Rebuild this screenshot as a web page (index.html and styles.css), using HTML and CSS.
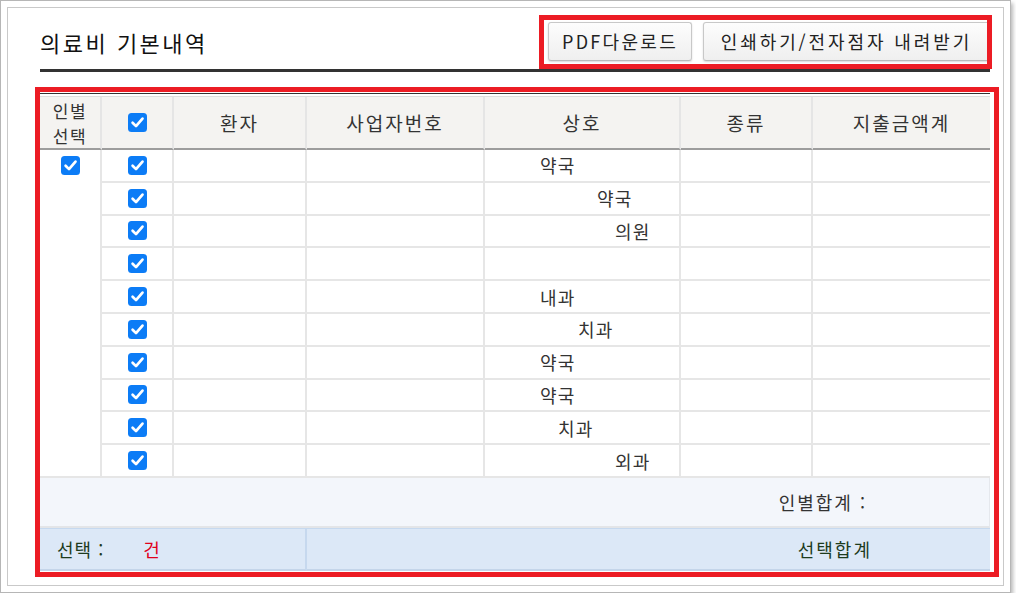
FILE: index.html
```html
<!DOCTYPE html>
<html lang="ko">
<head>
<meta charset="utf-8">
<title>의료비 기본내역</title>
<link rel="stylesheet" href="styles.css">
</head>
<body>
<div class="frame">
  <div class="panel">
    <div class="head">
      <h2 class="title">의료비 기본내역</h2>
      <div class="btns">
        <button class="btn btn-pdf" type="button">PDF다운로드</button>
        <button class="btn btn-print" type="button">인쇄하기/전자점자 내려받기</button>
      </div>
    </div>
    <div class="grid-wrap">
      <table class="grid">
        <colgroup>
          <col class="w1"><col class="w2"><col class="w3"><col class="w4"><col class="w5"><col class="w6"><col class="w7">
        </colgroup>
        <thead>
          <tr class="hrow">
            <th class="h-sel"><span class="hl">인별</span><span class="hl">선택</span></th>
            <th><span class="cb"><svg viewBox="0 0 19 19" width="19" height="19"><rect width="19" height="19" rx="3.5" fill="#0c7cf6"/><path d="M4.6 9.8 L8 13.1 L14.5 5.6" fill="none" stroke="#fff" stroke-width="2.7" stroke-linecap="round" stroke-linejoin="round"/></svg></span></th>
            <th>환자</th>
            <th>사업자번호</th>
            <th>상호</th>
            <th>종류</th>
            <th class="last">지출금액계</th>
          </tr>
        </thead>
        <tbody>
          <tr class="row">
            <td class="c-sel" rowspan="10"><span class="cb"><svg viewBox="0 0 19 19" width="19" height="19"><rect width="19" height="19" rx="3.5" fill="#0c7cf6"/><path d="M4.6 9.8 L8 13.1 L14.5 5.6" fill="none" stroke="#fff" stroke-width="2.7" stroke-linecap="round" stroke-linejoin="round"/></svg></span></td>
            <td class="c-cb"><span class="cb"><svg viewBox="0 0 19 19" width="19" height="19"><rect width="19" height="19" rx="3.5" fill="#0c7cf6"/><path d="M4.6 9.8 L8 13.1 L14.5 5.6" fill="none" stroke="#fff" stroke-width="2.7" stroke-linecap="round" stroke-linejoin="round"/></svg></span></td>
            <td></td><td></td><td class="c-name i1">약국</td><td></td><td class="last"></td>
          </tr>
          <tr class="row">
            <td class="c-cb"><span class="cb"><svg viewBox="0 0 19 19" width="19" height="19"><rect width="19" height="19" rx="3.5" fill="#0c7cf6"/><path d="M4.6 9.8 L8 13.1 L14.5 5.6" fill="none" stroke="#fff" stroke-width="2.7" stroke-linecap="round" stroke-linejoin="round"/></svg></span></td>
            <td></td><td></td><td class="c-name i4">약국</td><td></td><td class="last"></td>
          </tr>
          <tr class="row">
            <td class="c-cb"><span class="cb"><svg viewBox="0 0 19 19" width="19" height="19"><rect width="19" height="19" rx="3.5" fill="#0c7cf6"/><path d="M4.6 9.8 L8 13.1 L14.5 5.6" fill="none" stroke="#fff" stroke-width="2.7" stroke-linecap="round" stroke-linejoin="round"/></svg></span></td>
            <td></td><td></td><td class="c-name i5">의원</td><td></td><td class="last"></td>
          </tr>
          <tr class="row">
            <td class="c-cb"><span class="cb"><svg viewBox="0 0 19 19" width="19" height="19"><rect width="19" height="19" rx="3.5" fill="#0c7cf6"/><path d="M4.6 9.8 L8 13.1 L14.5 5.6" fill="none" stroke="#fff" stroke-width="2.7" stroke-linecap="round" stroke-linejoin="round"/></svg></span></td>
            <td></td><td></td><td class="c-name"></td><td></td><td class="last"></td>
          </tr>
          <tr class="row">
            <td class="c-cb"><span class="cb"><svg viewBox="0 0 19 19" width="19" height="19"><rect width="19" height="19" rx="3.5" fill="#0c7cf6"/><path d="M4.6 9.8 L8 13.1 L14.5 5.6" fill="none" stroke="#fff" stroke-width="2.7" stroke-linecap="round" stroke-linejoin="round"/></svg></span></td>
            <td></td><td></td><td class="c-name i1">내과</td><td></td><td class="last"></td>
          </tr>
          <tr class="row">
            <td class="c-cb"><span class="cb"><svg viewBox="0 0 19 19" width="19" height="19"><rect width="19" height="19" rx="3.5" fill="#0c7cf6"/><path d="M4.6 9.8 L8 13.1 L14.5 5.6" fill="none" stroke="#fff" stroke-width="2.7" stroke-linecap="round" stroke-linejoin="round"/></svg></span></td>
            <td></td><td></td><td class="c-name i3">치과</td><td></td><td class="last"></td>
          </tr>
          <tr class="row">
            <td class="c-cb"><span class="cb"><svg viewBox="0 0 19 19" width="19" height="19"><rect width="19" height="19" rx="3.5" fill="#0c7cf6"/><path d="M4.6 9.8 L8 13.1 L14.5 5.6" fill="none" stroke="#fff" stroke-width="2.7" stroke-linecap="round" stroke-linejoin="round"/></svg></span></td>
            <td></td><td></td><td class="c-name i1">약국</td><td></td><td class="last"></td>
          </tr>
          <tr class="row">
            <td class="c-cb"><span class="cb"><svg viewBox="0 0 19 19" width="19" height="19"><rect width="19" height="19" rx="3.5" fill="#0c7cf6"/><path d="M4.6 9.8 L8 13.1 L14.5 5.6" fill="none" stroke="#fff" stroke-width="2.7" stroke-linecap="round" stroke-linejoin="round"/></svg></span></td>
            <td></td><td></td><td class="c-name i1">약국</td><td></td><td class="last"></td>
          </tr>
          <tr class="row">
            <td class="c-cb"><span class="cb"><svg viewBox="0 0 19 19" width="19" height="19"><rect width="19" height="19" rx="3.5" fill="#0c7cf6"/><path d="M4.6 9.8 L8 13.1 L14.5 5.6" fill="none" stroke="#fff" stroke-width="2.7" stroke-linecap="round" stroke-linejoin="round"/></svg></span></td>
            <td></td><td></td><td class="c-name i2">치과</td><td></td><td class="last"></td>
          </tr>
          <tr class="row">
            <td class="c-cb"><span class="cb"><svg viewBox="0 0 19 19" width="19" height="19"><rect width="19" height="19" rx="3.5" fill="#0c7cf6"/><path d="M4.6 9.8 L8 13.1 L14.5 5.6" fill="none" stroke="#fff" stroke-width="2.7" stroke-linecap="round" stroke-linejoin="round"/></svg></span></td>
            <td></td><td></td><td class="c-name i5">외과</td><td></td><td class="last"></td>
          </tr>
        </tbody>
        <tfoot>
          <tr class="sum1">
            <td colspan="7">인별합계 :</td>
          </tr>
          <tr class="sum2">
            <td colspan="3" class="sel-count">선택 : <span class="num"></span><span class="unit">건</span></td>
            <td colspan="4" class="sel-total">선택합계</td>
          </tr>
        </tfoot>
      </table>
    </div>
  </div>
</div>
</body>
</html>
```

FILE: styles.css
```css
* {
  box-sizing: border-box;
}

html,
body {
  margin: 0;
  padding: 0;
  background: #ffffff;
}

body {
  font-family: "Noto Sans CJK KR", "Noto Sans", sans-serif;
  color: #333333;
}

.frame {
  width: 1011px;
  height: 593px;
  border: 1px solid #b6b6b6;
  padding: 6px;
  background: #ffffff;
  box-shadow: 2px 3px 4px rgba(0, 0, 0, 0.28);
}

.panel {
  height: 100%;
  border: 1px solid #c9c9c9;
  padding: 0 13px 0 32px;
}

/* ---------- heading ---------- */
.head {
  height: 64px;
  display: flex;
  justify-content: space-between;
  align-items: flex-end;
  padding-bottom: 8px;
  border-bottom: 3px solid #333333;
}

.title {
  margin: 0 0 4px;
  font-size: 22px;
  line-height: 30px;
  font-weight: normal;
  letter-spacing: 2.5px;
  color: #111111;
}

.btns {
  position: relative;
  display: flex;
  gap: 11px;
}

.btns::after {
  content: "";
  position: absolute;
  top: -7px;
  bottom: -8px;
  left: -9px;
  right: -2px;
  border: 5px solid #ec1c24;
  pointer-events: none;
}

.btn {
  height: 39px;
  padding: 0;
  font-family: inherit;
  font-size: 18px;
  line-height: 37px;
  color: #222222;
  background: linear-gradient(#fdfdfd, #efefef);
  border: 1px solid #c8c8c8;
  border-bottom-color: #b9b9b9;
  border-radius: 3px;
  box-shadow: 0 1px 2px rgba(0, 0, 0, 0.16);
}

.btn-pdf {
  width: 144px;
  letter-spacing: 2.3px;
}

.btn-print {
  width: 287px;
  letter-spacing: 2.9px;
}

/* ---------- table ---------- */
.grid-wrap {
  position: relative;
  margin-top: 21px;
  border-top: 1px solid #333333;
  padding-top: 2px;
}

.grid-wrap::after {
  content: "";
  position: absolute;
  top: -7px;
  left: -5px;
  right: -9px;
  bottom: -6px;
  border: 5px solid #ec1c24;
  pointer-events: none;
}

.grid {
  width: 950px;
  table-layout: fixed;
  border-collapse: separate;
  border-spacing: 0;
  border-top: 1px solid #dedede;
}

.w1 { width: 62px; }
.w2 { width: 72px; }
.w3 { width: 133px; }
.w4 { width: 178px; }
.w5 { width: 196px; }
.w6 { width: 132px; }
.w7 { width: 177px; }

.hrow {
  height: 53px;
}

.grid th {
  padding: 0;
  background: #f4f3f1;
  font-size: 19px;
  font-weight: normal;
  letter-spacing: 2px;
  color: #333333;
  text-align: center;
  vertical-align: middle;
  border-right: 2px solid #e5e5e5;
  border-bottom: 2px solid #9d9d9d;
}

.grid th.h-sel {
  font-size: 17px;
  letter-spacing: 1.5px;
}

.hl {
  display: block;
  height: 25px;
  line-height: 25px;
}

.grid th.last,
.grid td.last {
  border-right: none;
}

.row {
  height: 32.8px;
}

.grid td {
  padding: 0;
  font-size: 18px;
  line-height: 1;
  letter-spacing: 1.1px;
  color: #333333;
  vertical-align: middle;
  border-right: 2px solid #e6e6e6;
  border-bottom: 2px solid #e6e6e6;
}

.grid td.c-sel {
  vertical-align: top;
  padding-top: 6px;
}

.cb {
  display: block;
  width: 19px;
  height: 19px;
  margin: 0 auto;
}

.cb svg {
  display: block;
}

.grid td.c-name {
  text-align: left;
  white-space: nowrap;
}

.grid td.i1 { padding-left: 55px; }
.grid td.i2 { padding-left: 73px; }
.grid td.i3 { padding-left: 93px; }
.grid td.i4 { padding-left: 112px; }
.grid td.i5 { padding-left: 130px; }

/* ---------- totals ---------- */
.grid .sum1 td {
  height: 50px;
  background: #f3f6fb;
  border-right: 1px solid #e5e8ed;
  border-bottom: 2px solid #e3e5e8;
  text-align: right;
  padding-right: 122px;
  letter-spacing: 2px;
  color: #333333;
}

.grid .sum2 td {
  height: 43px;
  background: #dce8f7;
  border-top: 1px solid #c6d9ef;
  border-bottom: 2px solid #c4d5ea;
  border-right: 2px solid #c6d8ee;
  letter-spacing: 2px;
  color: #1d3b1d;
}

.grid .sum2 td.sel-count {
  text-align: left;
  padding-left: 17px;
  letter-spacing: 1px;
}

.grid .sum2 td.sel-total {
  text-align: right;
  padding-right: 118px;
  border-right: none;
}

.num {
  display: inline-block;
  width: 33px;
}

.unit {
  color: #e0001b;
}
```
